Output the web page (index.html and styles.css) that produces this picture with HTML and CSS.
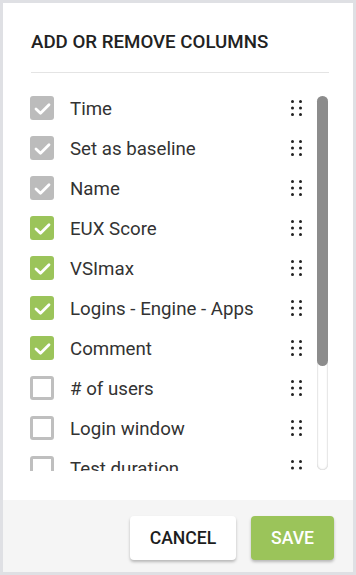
FILE: index.html
```html
<!DOCTYPE html>
<html>
<head>
<meta charset="utf-8">
<link rel="stylesheet" href="styles.css">
</head>
<body>
<div class="dialog">
  <div class="header">
    <h1 class="title">ADD OR REMOVE COLUMNS</h1>
  </div>
  <div class="body">
    <div class="list">
      <div class="row"><span class="cb cb-locked"><svg viewBox="0 0 24 24"><polyline points="6,13 10.5,17.2 19,8.8"/></svg></span><span class="label">Time</span><svg class="drag" viewBox="0 0 12 18"><circle cx="2.5" cy="2.5" r="1.5"/><circle cx="10.5" cy="2.5" r="1.5"/><circle cx="2.5" cy="9" r="1.5"/><circle cx="10.5" cy="9" r="1.5"/><circle cx="2.5" cy="15.5" r="1.5"/><circle cx="10.5" cy="15.5" r="1.5"/></svg></div>
      <div class="row"><span class="cb cb-locked"><svg viewBox="0 0 24 24"><polyline points="6,13 10.5,17.2 19,8.8"/></svg></span><span class="label">Set as baseline</span><svg class="drag" viewBox="0 0 12 18"><circle cx="2.5" cy="2.5" r="1.5"/><circle cx="10.5" cy="2.5" r="1.5"/><circle cx="2.5" cy="9" r="1.5"/><circle cx="10.5" cy="9" r="1.5"/><circle cx="2.5" cy="15.5" r="1.5"/><circle cx="10.5" cy="15.5" r="1.5"/></svg></div>
      <div class="row"><span class="cb cb-locked"><svg viewBox="0 0 24 24"><polyline points="6,13 10.5,17.2 19,8.8"/></svg></span><span class="label">Name</span><svg class="drag" viewBox="0 0 12 18"><circle cx="2.5" cy="2.5" r="1.5"/><circle cx="10.5" cy="2.5" r="1.5"/><circle cx="2.5" cy="9" r="1.5"/><circle cx="10.5" cy="9" r="1.5"/><circle cx="2.5" cy="15.5" r="1.5"/><circle cx="10.5" cy="15.5" r="1.5"/></svg></div>
      <div class="row"><span class="cb cb-on"><svg viewBox="0 0 24 24"><polyline points="6,13 10.5,17.2 19,8.8"/></svg></span><span class="label">EUX Score</span><svg class="drag" viewBox="0 0 12 18"><circle cx="2.5" cy="2.5" r="1.5"/><circle cx="10.5" cy="2.5" r="1.5"/><circle cx="2.5" cy="9" r="1.5"/><circle cx="10.5" cy="9" r="1.5"/><circle cx="2.5" cy="15.5" r="1.5"/><circle cx="10.5" cy="15.5" r="1.5"/></svg></div>
      <div class="row"><span class="cb cb-on"><svg viewBox="0 0 24 24"><polyline points="6,13 10.5,17.2 19,8.8"/></svg></span><span class="label">VSImax</span><svg class="drag" viewBox="0 0 12 18"><circle cx="2.5" cy="2.5" r="1.5"/><circle cx="10.5" cy="2.5" r="1.5"/><circle cx="2.5" cy="9" r="1.5"/><circle cx="10.5" cy="9" r="1.5"/><circle cx="2.5" cy="15.5" r="1.5"/><circle cx="10.5" cy="15.5" r="1.5"/></svg></div>
      <div class="row"><span class="cb cb-on"><svg viewBox="0 0 24 24"><polyline points="6,13 10.5,17.2 19,8.8"/></svg></span><span class="label">Logins - Engine - Apps</span><svg class="drag" viewBox="0 0 12 18"><circle cx="2.5" cy="2.5" r="1.5"/><circle cx="10.5" cy="2.5" r="1.5"/><circle cx="2.5" cy="9" r="1.5"/><circle cx="10.5" cy="9" r="1.5"/><circle cx="2.5" cy="15.5" r="1.5"/><circle cx="10.5" cy="15.5" r="1.5"/></svg></div>
      <div class="row"><span class="cb cb-on"><svg viewBox="0 0 24 24"><polyline points="6,13 10.5,17.2 19,8.8"/></svg></span><span class="label">Comment</span><svg class="drag" viewBox="0 0 12 18"><circle cx="2.5" cy="2.5" r="1.5"/><circle cx="10.5" cy="2.5" r="1.5"/><circle cx="2.5" cy="9" r="1.5"/><circle cx="10.5" cy="9" r="1.5"/><circle cx="2.5" cy="15.5" r="1.5"/><circle cx="10.5" cy="15.5" r="1.5"/></svg></div>
      <div class="row"><span class="cb cb-off"></span><span class="label"># of users</span><svg class="drag" viewBox="0 0 12 18"><circle cx="2.5" cy="2.5" r="1.5"/><circle cx="10.5" cy="2.5" r="1.5"/><circle cx="2.5" cy="9" r="1.5"/><circle cx="10.5" cy="9" r="1.5"/><circle cx="2.5" cy="15.5" r="1.5"/><circle cx="10.5" cy="15.5" r="1.5"/></svg></div>
      <div class="row"><span class="cb cb-off"></span><span class="label">Login window</span><svg class="drag" viewBox="0 0 12 18"><circle cx="2.5" cy="2.5" r="1.5"/><circle cx="10.5" cy="2.5" r="1.5"/><circle cx="2.5" cy="9" r="1.5"/><circle cx="10.5" cy="9" r="1.5"/><circle cx="2.5" cy="15.5" r="1.5"/><circle cx="10.5" cy="15.5" r="1.5"/></svg></div>
      <div class="row"><span class="cb cb-off"></span><span class="label">Test duration</span><svg class="drag" viewBox="0 0 12 18"><circle cx="2.5" cy="2.5" r="1.5"/><circle cx="10.5" cy="2.5" r="1.5"/><circle cx="2.5" cy="9" r="1.5"/><circle cx="10.5" cy="9" r="1.5"/><circle cx="2.5" cy="15.5" r="1.5"/><circle cx="10.5" cy="15.5" r="1.5"/></svg></div>
    </div>
    <div class="scrollbar"><div class="thumb"></div></div>
  </div>
  <div class="footer">
    <button class="btn btn-cancel">CANCEL</button>
    <button class="btn btn-save">SAVE</button>
  </div>
</div>
</body>
</html>
```
FILE: styles.css
```css
html, body {
  margin: 0;
  padding: 0;
}
body {
  background: #dfe0e4;
  font-family: Roboto, "Liberation Sans", sans-serif;
  width: 356px;
  height: 575px;
  overflow: hidden;
}
.dialog {
  margin: 3px;
  width: 350px;
  height: 569px;
  background: #ffffff;
  display: flex;
  flex-direction: column;
}
.header {
  padding: 29px 24px 0 28px;
}
.title {
  margin: 0;
  padding-bottom: 20px;
  border-bottom: 1px solid #e4e4e4;
  font-size: 18.7px;
  line-height: 20px;
  font-weight: 500;
  color: #222222;
}
.body {
  height: 427px;
  display: flex;
  padding: 15px 25px 0 27px;
  box-sizing: border-box;
}
.list {
  flex: 1;
  height: 383px;
  overflow: hidden;
}
.row {
  height: 40px;
  display: flex;
  align-items: center;
  padding-right: 1px;
}
.cb {
  width: 24px;
  height: 24px;
  border-radius: 3px;
  box-sizing: border-box;
  margin-right: 16px;
  flex: none;
  display: flex;
}
.cb svg {
  width: 24px;
  height: 24px;
  fill: none;
  stroke: #ffffff;
  stroke-width: 2.8;
  stroke-linecap: round;
  stroke-linejoin: round;
}
.cb-locked { background: #bcbcbc; }
.cb-on { background: #9bc45a; }
.cb-off { border: 3px solid #bfbfbf; background: #fff; }
.label {
  flex: 1;
  font-size: 18.7px;
  line-height: 22px;
  padding-top: 1px;
  color: #333333;
  white-space: nowrap;
}
.drag {
  width: 12px;
  height: 18px;
  fill: #222222;
  flex: none;
}
.scrollbar {
  width: 11px;
  height: 374px;
  margin-top: 8px;
  margin-left: 14px;
  border-radius: 6px;
  background: #ffffff;
  box-shadow: inset 0 0 2px rgba(0,0,0,0.35);
  flex: none;
}
.thumb {
  height: 270px;
  border-radius: 6px;
  background: #8c8c8c;
}
.footer {
  height: 72px;
  background: #f5f5f5;
  display: flex;
  justify-content: flex-end;
  align-items: flex-start;
  gap: 15px;
  padding: 16px 19px 0 0;
  box-sizing: border-box;
}
.btn {
  height: 44px;
  border: none;
  border-radius: 4px;
  font-family: Roboto, "Liberation Sans", sans-serif;
  font-size: 17.6px;
  font-weight: 500;
  box-shadow: 0 2px 3px rgba(0,0,0,0.25);
  padding: 0;
}
.btn-cancel {
  width: 106px;
  background: #ffffff;
  color: #1d1d1d;
}
.btn-save {
  width: 83px;
  background: #9bc45a;
  color: #ffffff;
}
```
